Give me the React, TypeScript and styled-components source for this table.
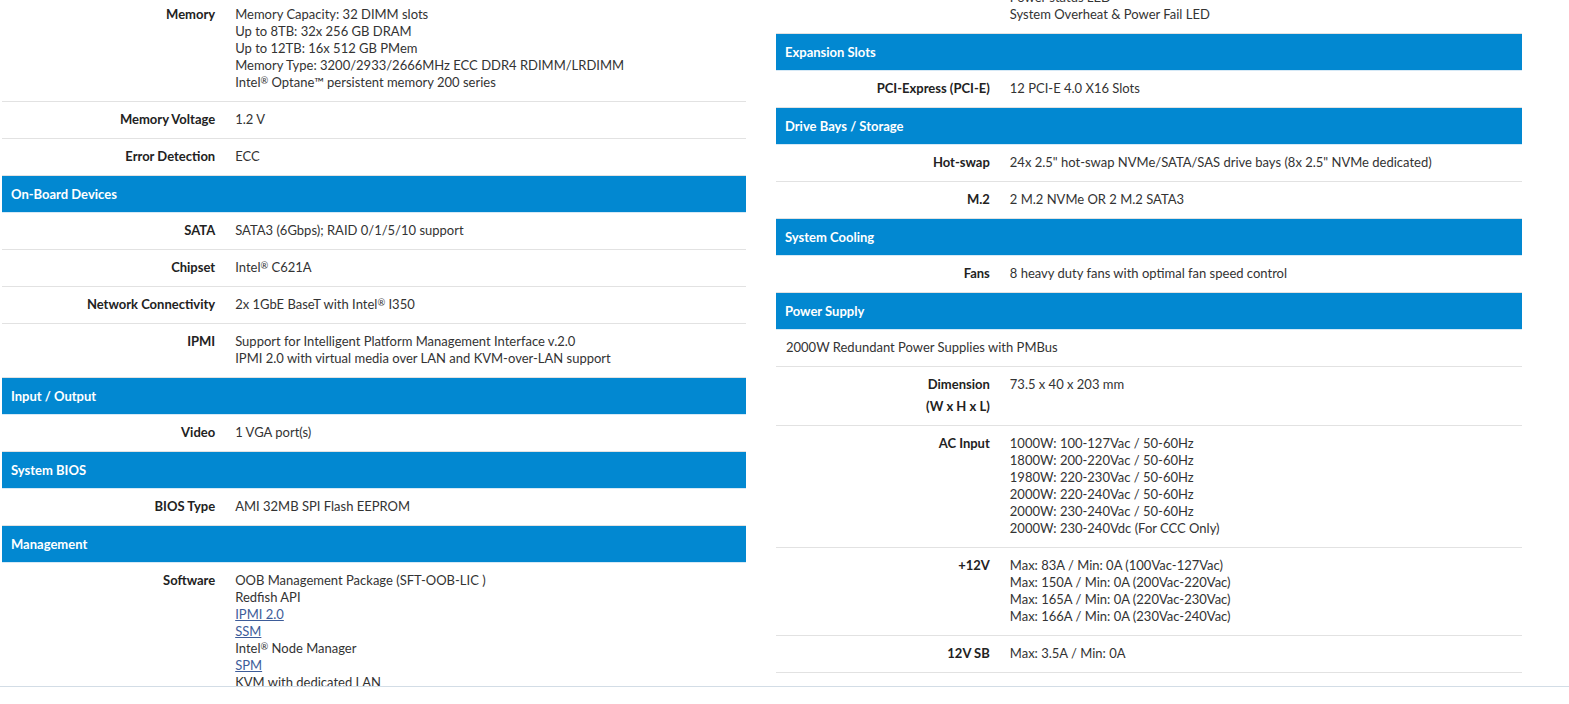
import React from "react";
import styled, { createGlobalStyle } from "styled-components";

const GlobalStyle = createGlobalStyle`
  html, body { margin: 0; padding: 0; background: #ffffff; }
  body { font-family: Lato, "Open Sans", Arial, sans-serif; color: #333333; }
  * { box-sizing: border-box; }
`;

type Line = string | { link: string };
type Item =
  | { kind: "header"; title: string }
  | { kind: "row"; label: React.ReactNode; lines: Line[] }
  | { kind: "full"; text: string };

const Page = styled.div`
  display: flex;
  flex-direction: column;
  width: 1569px;
  height: 704px;
  overflow: hidden;
`;

const Viewport = styled.div`
  flex: 1;
  overflow: hidden;
  display: flex;
  align-items: flex-start;
  gap: 30px;
  padding-left: 2px;
`;

const BottomBar = styled.div`
  height: 18px;
  flex: none;
  background: #ffffff;
  border-top: 1px solid #d3dde6;
`;

const Column = styled.div<{ $width: number; $shift: number }>`
  width: ${(p) => p.$width}px;
  flex: none;
  display: flex;
  flex-direction: column;
  margin-top: ${(p) => p.$shift}px;
`;

const Header = styled.div`
  height: 37px;
  padding: 0 10px 1px 9px;
  background: #0288d1;
  border-bottom: 1px solid #d6e9f6;
  color: #ffffff;
  font-weight: 700;
  font-size: 13px;
  line-height: 36px;
`;

const Row = styled.div`
  display: grid;
  grid-template-columns: 30% 1fr;
  border-bottom: 1px solid #e2e2e2;
`;

const Label = styled.div`
  padding: 6px 10px 8px 10px;
  text-align: right;
  font-weight: 700;
  font-size: 13px;
  line-height: 22px;
  color: #222222;
`;

const Value = styled.div`
  padding: 9px 10px 10px 10px;
  font-size: 13px;
  line-height: 17px;
  color: #333333;
`;

const FullRow = styled.div`
  padding: 9px 10px 10px 10px;
  font-size: 13px;
  line-height: 17px;
  color: #333333;
  border-bottom: 1px solid #e2e2e2;
`;

const Line = styled.div`
  white-space: nowrap;
`;

const Link = styled.a`
  color: #3d5c99;
  text-decoration: underline;
`;

const Reg = styled.span`
  font-size: 0.72em;
  position: relative;
  top: -0.35em;
  line-height: 0;
`;

const withMarks = (s: string) => {
  const parts = s.split("®");
  return parts.map((p, i) => (
    <React.Fragment key={i}>
      {p}
      {i < parts.length - 1 && <Reg>®</Reg>}
    </React.Fragment>
  ));
};

const leftItems: Item[] = [
  {
    kind: "row",
    label: "Memory",
    lines: [
      "Memory Capacity: 32 DIMM slots",
      "Up to 8TB: 32x 256 GB DRAM",
      "Up to 12TB: 16x 512 GB PMem",
      "Memory Type: 3200/2933/2666MHz ECC DDR4 RDIMM/LRDIMM",
      "Intel® Optane™ persistent memory 200 series",
    ],
  },
  { kind: "row", label: "Memory Voltage", lines: ["1.2 V"] },
  { kind: "row", label: "Error Detection", lines: ["ECC"] },
  { kind: "header", title: "On-Board Devices" },
  { kind: "row", label: "SATA", lines: ["SATA3 (6Gbps); RAID 0/1/5/10 support"] },
  { kind: "row", label: "Chipset", lines: ["Intel® C621A"] },
  { kind: "row", label: "Network Connectivity", lines: ["2x 1GbE BaseT with Intel® I350"] },
  {
    kind: "row",
    label: "IPMI",
    lines: [
      "Support for Intelligent Platform Management Interface v.2.0",
      "IPMI 2.0 with virtual media over LAN and KVM-over-LAN support",
    ],
  },
  { kind: "header", title: "Input / Output" },
  { kind: "row", label: "Video", lines: ["1 VGA port(s)"] },
  { kind: "header", title: "System BIOS" },
  { kind: "row", label: "BIOS Type", lines: ["AMI 32MB SPI Flash EEPROM"] },
  { kind: "header", title: "Management" },
  {
    kind: "row",
    label: "Software",
    lines: [
      "OOB Management Package (SFT-OOB-LIC )",
      "Redfish API",
      { link: "IPMI 2.0" },
      { link: "SSM" },
      "Intel® Node Manager",
      { link: "SPM" },
      "KVM with dedicated LAN",
    ],
  },
];

const rightItems: Item[] = [
  {
    kind: "row",
    label: "LED",
    lines: [
      "UID LED",
      "HDD activity LED",
      "Network activity LEDs",
      "Power status LED",
      "System Overheat & Power Fail LED",
    ],
  },
  { kind: "header", title: "Expansion Slots" },
  { kind: "row", label: "PCI-Express (PCI-E)", lines: ["12 PCI-E 4.0 X16 Slots"] },
  { kind: "header", title: "Drive Bays / Storage" },
  {
    kind: "row",
    label: "Hot-swap",
    lines: ['24x 2.5" hot-swap NVMe/SATA/SAS drive bays (8x 2.5" NVMe dedicated)'],
  },
  { kind: "row", label: "M.2", lines: ["2 M.2 NVMe OR 2 M.2 SATA3"] },
  { kind: "header", title: "System Cooling" },
  { kind: "row", label: "Fans", lines: ["8 heavy duty fans with optimal fan speed control"] },
  { kind: "header", title: "Power Supply" },
  { kind: "full", text: "2000W Redundant Power Supplies with PMBus" },
  {
    kind: "row",
    label: (
      <>
        Dimension
        <br />
        (W x H x L)
      </>
    ),
    lines: ["73.5 x 40 x 203 mm"],
  },
  {
    kind: "row",
    label: "AC Input",
    lines: [
      "1000W: 100-127Vac / 50-60Hz",
      "1800W: 200-220Vac / 50-60Hz",
      "1980W: 220-230Vac / 50-60Hz",
      "2000W: 220-240Vac / 50-60Hz",
      "2000W: 230-240Vac / 50-60Hz",
      "2000W: 230-240Vdc (For CCC Only)",
    ],
  },
  {
    kind: "row",
    label: "+12V",
    lines: [
      "Max: 83A / Min: 0A (100Vac-127Vac)",
      "Max: 150A / Min: 0A (200Vac-220Vac)",
      "Max: 165A / Min: 0A (220Vac-230Vac)",
      "Max: 166A / Min: 0A (230Vac-240Vac)",
    ],
  },
  { kind: "row", label: "12V SB", lines: ["Max: 3.5A / Min: 0A"] },
];

const renderItem = (item: Item, i: number) => {
  if (item.kind === "header") return <Header key={i}>{item.title}</Header>;
  if (item.kind === "full") return <FullRow key={i}>{item.text}</FullRow>;
  return (
    <Row key={i}>
      <Label>{item.label}</Label>
      <Value>
        {item.lines.map((l, j) =>
          typeof l === "string" ? (
            <Line key={j}>{withMarks(l)}</Line>
          ) : (
            <Line key={j}>
              <Link href="#">{l.link}</Link>
            </Line>
          )
        )}
      </Value>
    </Row>
  );
};

export default function App() {
  return (
    <>
      <GlobalStyle />
      <Page>
        <Viewport>
          <Column $width={744} $shift={-3}>
            {leftItems.map(renderItem)}
          </Column>
          <Column $width={746} $shift={-71}>
            {rightItems.map(renderItem)}
          </Column>
        </Viewport>
        <BottomBar />
      </Page>
    </>
  );
}
